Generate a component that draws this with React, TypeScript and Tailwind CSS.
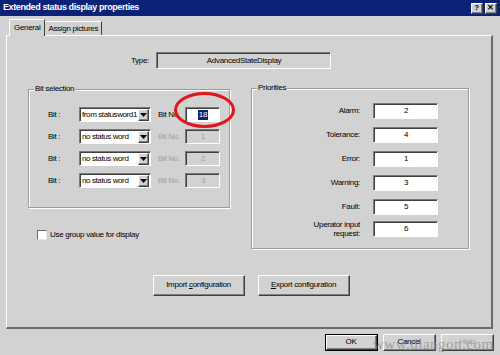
import React from "react";

const font = { fontFamily: '"Liberation Sans", Arial, sans-serif' };

function Sunken({ className = "", children }: { className?: string; children?: React.ReactNode }) {
  return (
    <div
      className={`border-t border-l border-t-[#7a7a7a] border-l-[#7a7a7a] border-b border-r border-b-white border-r-white ${className}`}
    >
      <div className="w-full h-full border-t border-l border-t-[#404040] border-l-[#404040] flex items-center justify-center">
        {children}
      </div>
    </div>
  );
}

function Raised({ className = "", children }: { className?: string; children?: React.ReactNode }) {
  return (
    <div
      className={`border-t border-l border-t-white border-l-white border-b border-r border-b-[#404040] border-r-[#404040] ${className}`}
    >
      <div className="w-full h-full border-b border-r border-b-[#808080] border-r-[#808080] flex items-center justify-center">
        {children}
      </div>
    </div>
  );
}

function Dropdown({ value }: { value: string }) {
  return (
    <div className="w-[72px] h-[15px] border-t border-l border-t-[#7a7a7a] border-l-[#7a7a7a] border-b border-r border-b-white border-r-white">
      <div className="w-full h-full bg-white border-t border-l border-t-[#404040] border-l-[#404040] flex items-center">
        <span className="flex-1 pl-[1px] text-[8px] tracking-[-0.4px] text-black whitespace-nowrap overflow-hidden">{value}</span>
        <Raised className="w-[11px] h-[12px] bg-[#d2d2d2] mr-[1px]">
          <svg width="7" height="4" viewBox="0 0 7 4">
            <path d="M0 0h7L3.5 4z" fill="#000" />
          </svg>
        </Raised>
      </div>
    </div>
  );
}

function GroupBox({ title, className = "", children }: { title: string; className?: string; children?: React.ReactNode }) {
  return (
    <div className={`relative border border-[#9c9c9c] shadow-[1px_1px_0_#ffffff,inset_1px_1px_0_#ffffff] ${className}`}>
      <span className="absolute -top-[6px] left-[5px] px-[1px] bg-[#d2d2d2] text-[8px] leading-[10px] text-black">
        {title}
      </span>
      {children}
    </div>
  );
}

const bits = [
  { src: "from statusword1", no: "18", active: true },
  { src: "no status word", no: "1", active: false },
  { src: "no status word", no: "2", active: false },
  { src: "no status word", no: "3", active: false },
];

const priorities = [
  { label: "Alarm:", value: "2" },
  { label: "Tolerance:", value: "4" },
  { label: "Error:", value: "1" },
  { label: "Warning:", value: "3" },
  { label: "Fault:", value: "5" },
];

function Button({ label, className = "" }: { label: React.ReactNode; className?: string }) {
  return (
    <Raised className={`bg-[#d2d2d2] ${className}`}>
      <span className="text-[8px] text-black">{label}</span>
    </Raised>
  );
}

export default function App() {
  return (
    <div className="w-[500px] h-[355px] bg-[#d2d2d2] relative overflow-hidden text-black tracking-[-0.3px]" style={font}>
      {/* Title bar */}
      <div className="h-[16px] bg-[#0a2278] flex items-center px-[3px]">
        <span className="flex-1 text-white font-bold text-[9px] tracking-[-0.4px]">Extended status display properties</span>
        <div className="flex gap-[2px]">
          <Raised className="w-[12px] h-[11px] bg-[#d2d2d2]">
            <span className="text-[8px] font-bold leading-none">?</span>
          </Raised>
          <Raised className="w-[12px] h-[11px] bg-[#d2d2d2]">
            <span className="text-[8px] font-bold leading-none">✕</span>
          </Raised>
        </div>
      </div>

      {/* Tabs */}
      <div className="flex items-end pl-[9px] pt-[3px] h-[19px]">
        <div className="relative z-10 h-[17px] px-[4px] bg-[#d2d2d2] border-t border-l border-t-white border-l-white border-r border-r-[#404040] flex items-center -mb-[1px]">
          <span className="text-[8px]">General</span>
        </div>
        <div className="h-[14px] px-[3px] border-t border-t-white border-r border-r-[#404040] flex items-center">
          <span className="text-[8px]">Assign pictures</span>
        </div>
      </div>

      {/* Tab panel */}
      <div className="ml-[6px] w-[487px] h-[294px] border-t border-l border-t-white border-l-white border-r-2 border-b-2 border-r-[#6a6a6a] border-b-[#6a6a6a] flex flex-col">
        <div className="flex items-center mt-[16px] h-[17px]">
          <span className="w-[143px] text-right text-[8px] pr-[1px]">Type:</span>
          <Sunken className="ml-[6px] w-[175px] h-[17px]">
            <span className="text-[8px]">AdvancedStateDisplay</span>
          </Sunken>
        </div>

        <div className="flex items-start mt-[20px] ml-[21px]">
          <div className="flex flex-col">
            <GroupBox title="Bit selection" className="w-[202px] h-[119px] pt-[17px] pl-[19px]">
              <div className="flex flex-col gap-[7px]">
                {bits.map((b, i) => (
                  <div key={i} className="flex items-center h-[15px]">
                    <span className="w-[31px] text-[8px]">Bit :</span>
                    <Dropdown value={b.src} />
                    <span className={`ml-[7px] w-[27px] text-[8px] whitespace-nowrap ${b.active ? "text-black" : "text-[#a0a0a0]"}`}>
                      Bit No.
                    </span>
                    <div className="w-[35px] h-[15px] border-t border-l border-t-[#7a7a7a] border-l-[#7a7a7a] border-b border-r border-b-white border-r-white">
                      <div
                        className={`w-full h-full border-t border-l border-t-[#404040] border-l-[#404040] flex items-center justify-center ${b.active ? "bg-white" : "bg-[#d2d2d2]"}`}
                      >
                        {b.active ? (
                          <span className="text-[8px] bg-[#0a2278] text-white px-[1px] leading-[10px]">{b.no}</span>
                        ) : (
                          <span className="text-[8px] text-[#a0a0a0]">{b.no}</span>
                        )}
                      </div>
                    </div>
                  </div>
                ))}
              </div>
            </GroupBox>

            <div className="flex items-center mt-[21px] ml-[9px]">
              <div className="w-[10px] h-[10px] bg-white border-t border-l border-t-[#6a6a6a] border-l-[#6a6a6a] border-b border-r border-b-[#e8e8e8] border-r-[#e8e8e8]" />
              <span className="ml-[3px] text-[8px]">Use group value for display</span>
            </div>
          </div>

          <GroupBox title="Priorities" className="ml-[21px] mt-[-1px] w-[218px] h-[161px] pt-[14px]">
            <div className="flex flex-col gap-[9px]">
              {priorities.map((p) => (
                <div key={p.label} className="flex items-center h-[15px]">
                  <span className="w-[108px] text-right text-[8px]">{p.label}</span>
                  <Sunken className="ml-[13px] w-[65px] h-[16px] bg-white">
                    <span className="text-[8px]">{p.value}</span>
                  </Sunken>
                </div>
              ))}
              <div className="flex items-center h-[15px] -mt-[2px]">
                <span className="w-[108px] text-right text-[8px] leading-[9px]">
                  Uperator input
                  <br />
                  request:
                </span>
                <Sunken className="ml-[13px] w-[65px] h-[16px] bg-white">
                  <span className="text-[8px]">6</span>
                </Sunken>
              </div>
            </div>
          </GroupBox>
        </div>

        <div className="flex gap-[13px] ml-[146px] mt-[26px]">
          <Button
            className="w-[92px] h-[21px]"
            label={
              <>
                Import <span className="underline">c</span>onfiguration
              </>
            }
          />
          <Button
            className="w-[92px] h-[21px]"
            label={
              <>
                <span className="underline">E</span>xport configuration
              </>
            }
          />
        </div>
      </div>

      {/* Bottom buttons */}
      <div className="flex gap-[5px] justify-end pr-[6px] mt-[5px]">
        <div className="w-[53px] h-[17px] border border-black">
          <Button className="w-full h-full" label="OK" />
        </div>
        <Button className="w-[53px] h-[17px]" label="Cancel" />
        <Button className="w-[53px] h-[17px]" label={<span className="text-[#a0a0a0]">Help</span>} />
      </div>

      {/* Red annotation ellipse */}
      <div className="absolute left-[174px] top-[92px] w-[61px] h-[36px] rounded-[50%] border-[3px] border-[#e0161b]" />

      {/* Watermark */}
      <span
        className="absolute left-[373px] top-[333px] text-[15px] text-[#8a8a8a] opacity-70 tracking-[0.5px]"
        style={{ fontFamily: '"Liberation Serif", "Times New Roman", serif' }}
      >
        www.diangon.com
      </span>
    </div>
  );
}
